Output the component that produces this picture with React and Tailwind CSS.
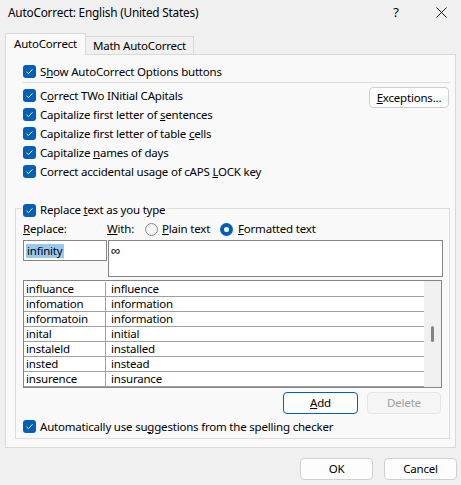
import React from "react";

function Check() {
  return (
    <span className="w-[13px] h-[13px] rounded-[3px] bg-[#005fb8] flex items-center justify-center shrink-0">
      <svg width="9" height="9" viewBox="0 0 9 9">
        <path d="M1.6 4.8 L3.5 6.6 L7.4 2.4" fill="none" stroke="#ffffff" strokeWidth="1" />
      </svg>
    </span>
  );
}

function CheckRow({ children }) {
  return (
    <div className="h-[19px] flex items-center">
      <Check />
      <span className="ml-[4px] whitespace-nowrap">{children}</span>
    </div>
  );
}

const rows = [
  ["influance", "influence"],
  ["infomation", "information"],
  ["informatoin", "information"],
  ["inital", "initial"],
  ["instaleld", "installed"],
  ["insted", "instead"],
  ["insurence", "insurance"],
];

export default function App() {
  return (
    <div className="w-[461px] h-[485px] bg-[#f0f0f0] text-[11.5px] tracking-[-0.2px] leading-[16px] text-black font-['Noto_Sans',sans-serif] flex flex-col overflow-hidden select-none">
      {/* Title bar */}
      <div className="h-[24px] flex items-center">
        <div className="pl-[8px] flex-1 whitespace-nowrap text-[11.8px]">AutoCorrect: English (United States)</div>
        <div className="w-[40px] text-center text-[13px]">?</div>
        <div className="w-[5px]" />
        <div className="w-[40px] flex items-center justify-center">
          <svg width="11" height="11" viewBox="0 0 11 11">
            <path d="M0.5 0.5 L10.5 10.5 M10.5 0.5 L0.5 10.5" stroke="#1a1a1a" strokeWidth="1" />
          </svg>
        </div>
      </div>

      {/* Tabs */}
      <div className="pl-[5px] pt-[9px] flex items-end">
        <div className="relative z-10 -mb-px h-[22px] w-[81px] bg-[#f9f9f9] border border-b-0 border-[#d9d9d9] rounded-t-[2px] flex items-center justify-center pb-[2px]">
          AutoCorrect
        </div>
        <div className="h-[18px] w-[108px] bg-[#f0f0f0] border border-b-0 border-l-0 border-[#d9d9d9] flex items-center justify-center">
          Math AutoCorrect
        </div>
      </div>

      {/* Panel */}
      <div className="ml-[5px] w-[451px] h-[394px] bg-[#f9f9f9] border border-[#d9d9d9] flex flex-col">
        <div className="ml-[17px] mt-[7px]">
          <CheckRow>
            S<u>h</u>ow AutoCorrect Options buttons
          </CheckRow>
        </div>
        <div className="ml-[17px] mt-[1px] w-[427px] h-px bg-[#dcdcdc]" />
        <div className="ml-[17px] mt-[3px] flex">
          <div className="flex flex-col flex-1">
            <CheckRow>
              C<u>o</u>rrect TWo INitial CApitals
            </CheckRow>
            <CheckRow>
              Capitalize first letter of <u>s</u>entences
            </CheckRow>
            <CheckRow>
              Capitalize first letter of table <u>c</u>ells
            </CheckRow>
            <CheckRow>
              Capitalize <u>n</u>ames of days
            </CheckRow>
            <CheckRow>
              Correct accidental usage of cAPS <u>L</u>OCK key
            </CheckRow>
          </div>
          <div className="mt-[1px] mr-[6px] w-[80px] h-[21px] rounded-[4px] bg-[#fdfdfd] border border-[#d0d0d0] flex items-center justify-center">
            <span>
              <u>E</u>xceptions...
            </span>
          </div>
        </div>

        {/* Group box */}
        <fieldset className="ml-[9px] mt-[19px] w-[435px] border border-[#dcdcdc] pb-[2px]">
          <legend className="ml-[6px] px-[1px]">
            <span className="h-[16px] flex items-center translate-y-[2px]">
              <Check />
              <span className="ml-[4px] pr-[1px] whitespace-nowrap">
                Replace <u>t</u>ext as you type
              </span>
            </span>
          </legend>

          <div className="ml-[7px] mt-[4px] h-[18px] flex items-center">
            <span className="w-[84px]">
              <u>R</u>eplace:
            </span>
            <span className="w-[38px]">
              <u>W</u>ith:
            </span>
            <span className="w-[13px] h-[13px] rounded-full border border-[#8a8a8a] bg-[#f5f5f5]" />
            <span className="ml-[4px] w-[58px]">
              <u>P</u>lain text
            </span>
            <span className="w-[13px] h-[13px] rounded-full bg-[#005fb8] flex items-center justify-center">
              <span className="w-[5px] h-[5px] rounded-full bg-white" />
            </span>
            <span className="ml-[5px]">
              <u>F</u>ormatted text
            </span>
          </div>

          <div className="ml-[7px] mt-[2px] flex items-start">
            <div className="w-[84px] h-[21px] bg-white border border-[#858585] flex items-center pl-[2px]">
              <span className="bg-[#99c9ef] px-[1px] leading-[14px]">infinity</span>
            </div>
            <div className="ml-px w-[335px] h-[37px] bg-white border border-[#858585] pl-[2px] pt-[1px] text-[13px]">
              ∞
            </div>
          </div>

          <div className="ml-[7px] mt-[3px] w-[419px] h-[108px] bg-white border border-[#858585] flex">
            <div className="flex-1 flex flex-col">
              {rows.map((r, i) => (
                <div
                  key={r[0]}
                  className={
                    "flex border-b border-[#a0a0a0] " + (i === 0 ? "h-[16px] pt-px" : "h-[15px]")
                  }
                >
                  <div className="w-[82px] pl-[2px] border-r border-[#a0a0a0] leading-[14px] whitespace-nowrap">{r[0]}</div>
                  <div className="pl-[5px] leading-[14px] whitespace-nowrap">{r[1]}</div>
                </div>
              ))}
            </div>
            <div className="w-[17px] bg-[#f0f0f0] relative">
              <div className="absolute left-[7px] top-[45px] w-[3px] h-[16px] rounded-full bg-[#858585]" />
            </div>
          </div>

          <div className="ml-[7px] mt-[4px] w-[418px] flex justify-end gap-[9px]">
            <div className="w-[75px] h-[22px] rounded-[4px] bg-[#fdfdfd] border border-[#005fb8] flex items-center justify-center">
              <span>
                <u>A</u>dd
              </span>
            </div>
            <div className="w-[74px] h-[22px] rounded-[4px] bg-[#f5f5f5] border border-[#e5e5e5] text-[#a0a0a0] flex items-center justify-center">
              Delete
            </div>
          </div>

          <div className="ml-[7px] mt-[3px]">
            <CheckRow>
              Automatically use su<u>g</u>gestions from the spelling checker
            </CheckRow>
          </div>
        </fieldset>
      </div>

      {/* Bottom buttons */}
      <div className="mt-[10px] mr-[4px] flex justify-end gap-[11px]">
        <div className="w-[73px] h-[22px] rounded-[4px] bg-[#fdfdfd] border border-[#d0d0d0] flex items-center justify-center">
          OK
        </div>
        <div className="w-[73px] h-[22px] rounded-[4px] bg-[#fdfdfd] border border-[#d0d0d0] flex items-center justify-center">
          Cancel
        </div>
      </div>
    </div>
  );
}
